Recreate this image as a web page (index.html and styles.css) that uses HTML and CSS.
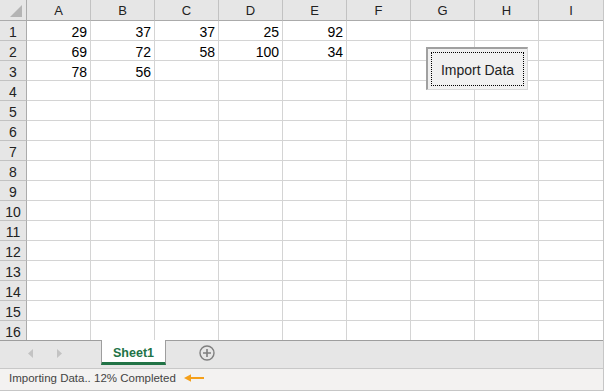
FILE: index.html
```
<!DOCTYPE html>
<html>
<head>
<meta charset="utf-8">
<link rel="stylesheet" href="styles.css">
</head>
<body>
<div class="app">
  <div class="grid">
    <div class="corner"><svg width="26" height="20" viewBox="0 0 26 20"><polygon points="22,5 22,17 10,17" fill="#b4b4b4"/></svg></div>
    <div class="ch">A</div><div class="ch">B</div><div class="ch">C</div><div class="ch">D</div><div class="ch">E</div><div class="ch">F</div><div class="ch">G</div><div class="ch">H</div><div class="ch">I</div>
    <div class="rh">1</div><div class="c">29</div><div class="c">37</div><div class="c">37</div><div class="c">25</div><div class="c">92</div><div class="c"></div><div class="c"></div><div class="c"></div><div class="c"></div>
    <div class="rh">2</div><div class="c">69</div><div class="c">72</div><div class="c">58</div><div class="c">100</div><div class="c">34</div><div class="c"></div><div class="c"></div><div class="c"></div><div class="c"></div>
    <div class="rh">3</div><div class="c">78</div><div class="c">56</div><div class="c"></div><div class="c"></div><div class="c"></div><div class="c"></div><div class="c"></div><div class="c"></div><div class="c"></div>
    <div class="rh">4</div><div class="c"></div><div class="c"></div><div class="c"></div><div class="c"></div><div class="c"></div><div class="c"></div><div class="c"></div><div class="c"></div><div class="c"></div>
    <div class="rh">5</div><div class="c"></div><div class="c"></div><div class="c"></div><div class="c"></div><div class="c"></div><div class="c"></div><div class="c"></div><div class="c"></div><div class="c"></div>
    <div class="rh">6</div><div class="c"></div><div class="c"></div><div class="c"></div><div class="c"></div><div class="c"></div><div class="c"></div><div class="c"></div><div class="c"></div><div class="c"></div>
    <div class="rh">7</div><div class="c"></div><div class="c"></div><div class="c"></div><div class="c"></div><div class="c"></div><div class="c"></div><div class="c"></div><div class="c"></div><div class="c"></div>
    <div class="rh">8</div><div class="c"></div><div class="c"></div><div class="c"></div><div class="c"></div><div class="c"></div><div class="c"></div><div class="c"></div><div class="c"></div><div class="c"></div>
    <div class="rh">9</div><div class="c"></div><div class="c"></div><div class="c"></div><div class="c"></div><div class="c"></div><div class="c"></div><div class="c"></div><div class="c"></div><div class="c"></div>
    <div class="rh">10</div><div class="c"></div><div class="c"></div><div class="c"></div><div class="c"></div><div class="c"></div><div class="c"></div><div class="c"></div><div class="c"></div><div class="c"></div>
    <div class="rh">11</div><div class="c"></div><div class="c"></div><div class="c"></div><div class="c"></div><div class="c"></div><div class="c"></div><div class="c"></div><div class="c"></div><div class="c"></div>
    <div class="rh">12</div><div class="c"></div><div class="c"></div><div class="c"></div><div class="c"></div><div class="c"></div><div class="c"></div><div class="c"></div><div class="c"></div><div class="c"></div>
    <div class="rh">13</div><div class="c"></div><div class="c"></div><div class="c"></div><div class="c"></div><div class="c"></div><div class="c"></div><div class="c"></div><div class="c"></div><div class="c"></div>
    <div class="rh">14</div><div class="c"></div><div class="c"></div><div class="c"></div><div class="c"></div><div class="c"></div><div class="c"></div><div class="c"></div><div class="c"></div><div class="c"></div>
    <div class="rh">15</div><div class="c"></div><div class="c"></div><div class="c"></div><div class="c"></div><div class="c"></div><div class="c"></div><div class="c"></div><div class="c"></div><div class="c"></div>
    <div class="rh">16</div><div class="c"></div><div class="c"></div><div class="c"></div><div class="c"></div><div class="c"></div><div class="c"></div><div class="c"></div><div class="c"></div><div class="c"></div>
  </div>
  <div class="btn"><div class="focus">Import Data</div></div>
  <div class="tabs">
    <div class="nav">
      <svg width="5" height="9" viewBox="0 0 5 9"><polygon points="5,0 5,9 0,4.5" fill="#c3c3c3"/></svg>
      <svg width="5" height="9" viewBox="0 0 5 9"><polygon points="0,0 0,9 5,4.5" fill="#c3c3c3"/></svg>
    </div>
    <div class="tab">Sheet1</div>
    <div class="add"><svg width="16" height="16" viewBox="0 0 16 16"><circle cx="8" cy="8" r="7" fill="none" stroke="#7f7f7f" stroke-width="1.4"/><path d="M8 4v8M4 8h8" stroke="#7f7f7f" stroke-width="1.6"/></svg></div>
  </div>
  <div class="status">
    <span class="msg">Importing Data.. 12% Completed</span>
    <svg class="arrow" width="20" height="8" viewBox="0 0 20 8"><polygon points="0,4 7,0.3 7,7.7" fill="#f5a01a"/><rect x="6" y="3" width="14" height="2" fill="#f5a01a"/></svg>
  </div>
</div>
</body>
</html>
```
FILE: styles.css
```
* { box-sizing: border-box; margin: 0; padding: 0; }
body {
  width: 604px;
  height: 391px;
  overflow: hidden;
  background: #fff;
  font-family: "Liberation Sans", Arial, sans-serif;
}
.app {
  position: relative;
  width: 604px;
  height: 391px;
  border-right: 1px solid #c6c6c6;
  border-bottom: 1px solid #c6c6c6;
  display: flex;
  flex-direction: column;
}
.grid {
  flex: none;
  height: 340px;
  overflow: hidden;
  display: grid;
  grid-template-columns: 27px repeat(9, 64px);
  grid-template-rows: 21px;
  grid-auto-rows: 20px;
}
.grid > :nth-child(10n) { border-right: none; }
.corner {
  background: #e6e6e6;
  border-right: 1px solid #ababab;
  border-bottom: 1px solid #ababab;
}
.corner svg { display: block; }
.ch {
  background: #e6e6e6;
  border-right: 1px solid #c2c2c2;
  border-bottom: 1px solid #ababab;
  text-align: center;
  font-size: 13px;
  line-height: 21px;
  color: #222;
}
.rh {
  background: #e6e6e6;
  border-right: 1px solid #ababab;
  border-bottom: 1px solid #c2c2c2;
  text-align: center;
  font-size: 14px;
  line-height: 22px;
  color: #222;
}
.c {
  border-right: 1px solid #d4d4d4;
  border-bottom: 1px solid #d4d4d4;
  text-align: right;
  padding-right: 3px;
  font-size: 14px;
  line-height: 23px;
  color: #000;
}
.btn {
  position: absolute;
  left: 426px;
  top: 47px;
  width: 102px;
  height: 43px;
  background: #f0f0f0;
  border-style: solid;
  border-width: 2px 1px 1px 2px;
  border-color: #a0a0a0 #d8d8d8 #d8d8d8 #a0a0a0;
  padding: 3px;
  font-size: 14px;
  color: #1e1e1e;
}
.focus {
  height: 100%;
  display: flex;
  align-items: center;
  justify-content: center;
  border: 1px dotted #000;
  padding-top: 2px;
}
.tabs {
  flex: none;
  height: 28px;
  background: #e6e6e6;
  border-top: 1px solid #9e9e9e;
  display: flex;
  align-items: flex-start;
}
.nav {
  width: 101px;
  display: flex;
  gap: 24px;
  padding-left: 28px;
  padding-top: 8px;
}
.nav svg { display: block; }
.tab {
  margin-top: -1px;
  width: 65px;
  height: 25px;
  background: #fff;
  border-left: 1px solid #9e9e9e;
  border-right: 1px solid #9e9e9e;
  border-bottom: 3px solid #217346;
  color: #217346;
  font-weight: bold;
  font-size: 12.5px;
  line-height: 26px;
  text-align: center;
}
.add {
  margin-left: 33px;
  margin-top: 4px;
}
.add svg { display: block; }
.status {
  flex: 1;
  background: #f3f2f1;
  border-top: 1px solid #c8c8c8;
  display: flex;
  align-items: flex-start;
  padding-left: 9px;
  font-size: 11.5px;
  line-height: 18px;
  color: #444;
}
.arrow {
  display: block;
  margin-left: 8px;
  margin-top: 5px;
}
```
